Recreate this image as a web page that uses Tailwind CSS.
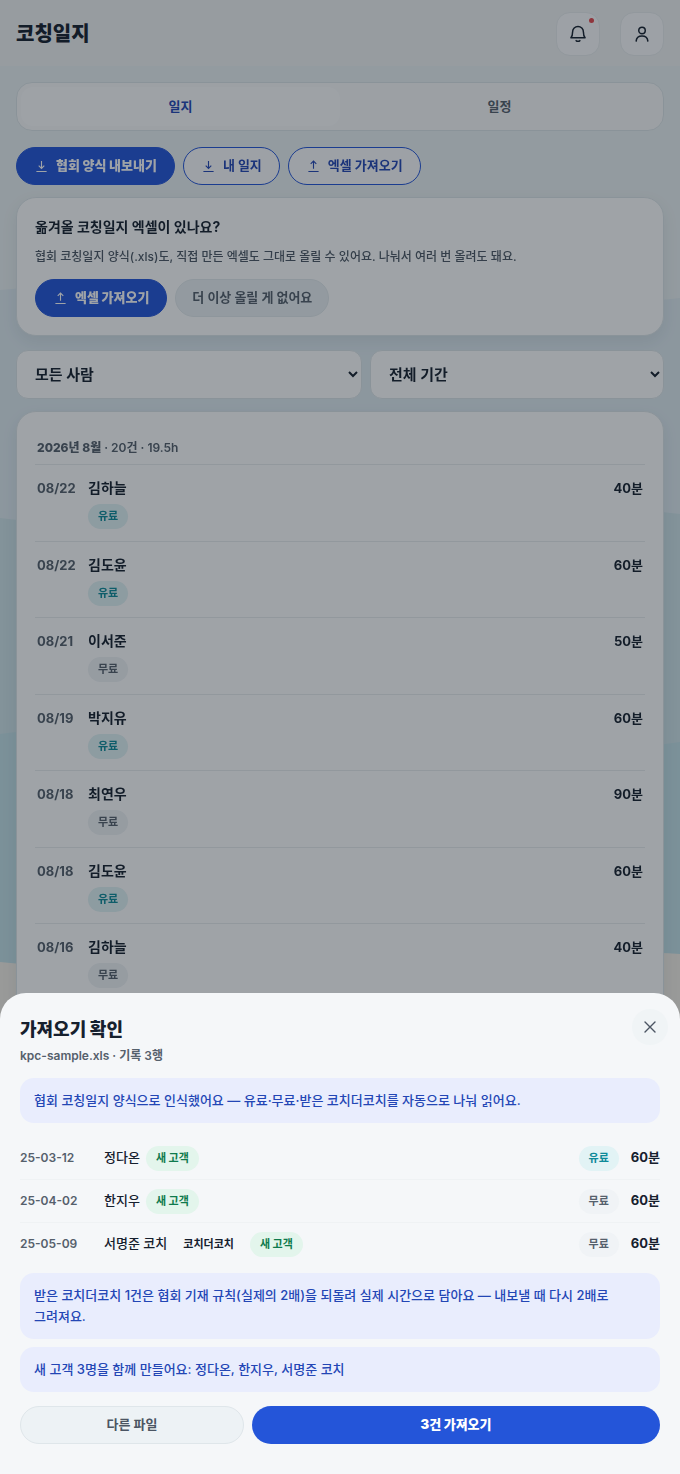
<!DOCTYPE html>
<html lang="ko">
<head>
  <meta charset="UTF-8" />
  <meta name="viewport" content="width=device-width, initial-scale=1.0"/>
  <title>코칭일지</title>
  <script src="https://cdn.jsdelivr.net/npm/@tailwindcss/browser@4"></script>
</head>
<body class="font-['Inter','Noto_Sans_CJK_KR',sans-serif] text-[#16202e] bg-[#ecf4f5] min-h-screen break-keep">

  <!-- 바다 배경 -->
  <svg class="fixed inset-0 w-full h-full -z-10" viewBox="0 0 680 1474" preserveAspectRatio="none" aria-hidden="true">
    <rect width="680" height="1474" fill="#ecf2f3"/>
    <path d="M0 290 C180 270 480 320 680 298 V1474 H0 Z" fill="#e0ebf1"/>
    <path d="M0 518 C180 540 480 490 680 514 V1474 H0 Z" fill="#d0e4e9"/>
    <path d="M0 734 C180 710 480 770 680 742 V1474 H0 Z" fill="#c4e1e8"/>
    <path d="M0 962 C180 980 480 940 680 954 V1474 H0 Z" fill="#f5f0e8"/>
  </svg>

  <div class="flex flex-col h-screen overflow-hidden">
    <header class="flex items-center justify-between h-[66px] px-4 pt-0.5 shrink-0 bg-[#f2f3f4]">
      <h1 class="text-[20px] leading-7 font-black">코칭일지</h1>
      <div class="flex gap-5">
        <button type="button" aria-label="알림" class="relative size-11 flex items-center justify-center rounded-[14px] bg-[#fcfcfd] border border-[#e9edee]">
          <svg class="size-5" viewBox="0 0 24 24" fill="none" stroke="currentColor" stroke-width="1.8" stroke-linecap="round" stroke-linejoin="round">
            <path d="M3.500 16.500h17c-1.500-1.500-2-3.500-2-7a6.500 6.500 0 0 0-13 0c0 3.500-.5 5.500-2 7Z"/>
            <path d="M9.800 20a2.600 1.800 0 0 0 4.400 0"/>
          </svg>
          <span class="absolute top-[5px] right-[5px] size-[5px] rounded-full bg-[#e5484d]"></span>
        </button>
        <button type="button" aria-label="내 정보" class="size-11 flex items-center justify-center rounded-[14px] bg-[#fcfcfd] border border-[#e9edee]">
          <svg class="size-5" viewBox="0 0 24 24" fill="none" stroke="currentColor" stroke-width="1.8" stroke-linecap="round" stroke-linejoin="round">
            <circle cx="12" cy="7.700" r="3.900"/>
            <path d="M5 20.500c.3-4 3.200-6 7-6s6.700 2 7 6"/>
          </svg>
        </button>
      </div>
    </header>

    <main class="flex flex-col flex-1 px-4 pt-4">
      <div class="grid grid-cols-2 shrink-0 h-[49px] p-1 rounded-2xl border border-[#dde5e8] bg-[#fafbfb] text-[13px] font-bold" role="tablist">
        <button type="button" role="tab" aria-selected="true" class="rounded-xl bg-[#fdfdfe] text-[#2346b5]">일지</button>
        <button type="button" role="tab" aria-selected="false" class="text-[#55606c]">일정</button>
      </div>

      <div class="flex gap-2 mt-4 text-[13px] font-bold">
        <button type="button" class="flex items-center gap-2 h-[38px] pl-[18px] pr-[17px] rounded-full border border-[#2455d9] bg-[#2455d9] text-white font-black">
          <svg class="size-[13px]" viewBox="0 0 14 14" fill="none" stroke="currentColor" stroke-width="1.2"><path d="M7 1v8M4 6l3 3 3-3M1.500 12.400h11"/></svg>
          협회 양식 내보내기
        </button>
        <button type="button" class="flex items-center gap-2 h-[38px] pl-[18px] pr-[17px] rounded-full border border-[#2455d9] bg-[#fcfcfd] text-[#2346b5]">
          <svg class="size-[13px]" viewBox="0 0 14 14" fill="none" stroke="currentColor" stroke-width="1.2"><path d="M7 1v8M4 6l3 3 3-3M1.500 12.400h11"/></svg>
          내 일지
        </button>
        <button type="button" class="flex items-center gap-2 h-[38px] pl-[18px] pr-[17px] rounded-full border border-[#2455d9] bg-[#fcfcfd] text-[#2346b5]">
          <svg class="size-[13px]" viewBox="0 0 14 14" fill="none" stroke="currentColor" stroke-width="1.2"><path d="M7 9.500V1.500M4 4.200l3-3 3 3M1.500 12.400h11"/></svg>
          엑셀 가져오기
        </button>
      </div>

      <section class="mt-3 px-[18px] py-[18px] rounded-[20px] border border-[#dde5e8] bg-white shadow-[0_6px_16px_rgba(20,50,70,0.08)]">
        <h2 class="text-[14px] leading-[22px] font-bold">옮겨올 코칭일지 엑셀이 있나요?</h2>
        <p class="mt-2 text-[12px] leading-[21px] font-medium text-[#4d5864]">협회 코칭일지 양식(.xls)도, 직접 만든 엑셀도 그대로 올릴 수 있어요. 나눠서 여러 번 올려도 돼요.</p>
        <div class="flex gap-2 mt-3 text-[13px] font-bold">
          <button type="button" class="flex items-center gap-2 h-[38px] pl-[18px] pr-[17px] rounded-full border border-[#2455d9] bg-[#2455d9] text-white font-black">
            <svg class="size-[13px]" viewBox="0 0 14 14" fill="none" stroke="currentColor" stroke-width="1.2"><path d="M7 9.500V1.500M4 4.200l3-3 3 3M1.500 12.400h11"/></svg>
            엑셀 가져오기
          </button>
          <button type="button" class="h-[38px] px-4 rounded-full border border-[#e3eaed] bg-[#ecf1f4] text-[#55606c]">더 이상 올릴 게 없어요</button>
        </div>
      </section>

      <div class="grid grid-cols-[346fr_294fr] gap-2 mt-[14px] text-[15px] font-bold">
        <select aria-label="사람" class="h-[49px] pl-[14px] rounded-xl border border-[#dde5e8] bg-white">
          <option>모든 사람</option>
        </select>
        <select aria-label="기간" class="h-[49px] pl-[14px] rounded-xl border border-[#dde5e8] bg-white">
          <option>전체 기간</option>
        </select>
      </div>

      <section class="flex-1 mt-3 px-[18px] pt-[18px] rounded-t-[20px] border border-[#dde5e8] bg-white shadow-[0_6px_16px_rgba(20,50,70,0.08)]">
        <h2 class="px-0.5 pt-[7px] pb-1.5 text-[12px] leading-[21px] font-semibold text-[#55606c] border-b border-[#e9edee]"><b class="font-extrabold">2026년 8월</b> · 20건 · 19.5h</h2>
        <ul id="logs"></ul>
      </section>
    </main>
  </div>

  <div class="fixed inset-0 bg-[#0f1a24]/40"></div>

  <div role="dialog" aria-labelledby="sheetTitle" class="fixed inset-x-0 bottom-0 px-5 pt-[25px] pb-[30px] rounded-t-[26px] bg-[#f5f7f9]">
    <button type="button" aria-label="닫기" class="absolute top-4 right-3 size-9 flex items-center justify-center rounded-full bg-[#f0f4f6] text-[#4b5563]">
      <svg class="size-3" viewBox="0 0 12 12" fill="none" stroke="currentColor" stroke-width="1.4" stroke-linecap="round"><path d="M1 1l10 10M11 1L1 11"/></svg>
    </button>
    <h2 id="sheetTitle" class="text-[18px] leading-6 font-black">가져오기 확인</h2>
    <p class="mt-1 text-[12px] leading-5 font-semibold text-[#55606c]">kpc-sample.xls · 기록 3행</p>
    <p class="mt-3 px-[14px] py-3 rounded-[14px] bg-[#e9edfd] text-[13px] leading-[21px] font-medium text-[#2346b5]">협회 코칭일지 양식으로 인식했어요 — 유료·무료·받은 코치더코치를 자동으로 나눠 읽어요.</p>

    <ul id="preview" class="mt-[14px] text-[13px]"></ul>

    <p class="mt-[7px] px-[14px] py-3 rounded-[14px] bg-[#e9edfd] text-[13px] leading-[21px] font-medium text-[#2346b5]">받은 코치더코치 1건은 협회 기재 규칙(실제의 2배)을 되돌려 실제 시간으로 담아요 — 내보낼 때 다시 2배로 그려져요.</p>
    <p class="mt-2 px-[14px] py-3 rounded-[14px] bg-[#e9edfd] text-[13px] leading-[21px] font-medium text-[#2346b5]">새 고객 3명을 함께 만들어요: 정다온, 한지우, 서명준 코치</p>

    <div class="grid grid-cols-[224fr_408fr] gap-2 mt-[14px] text-[13px] font-bold">
      <button type="button" class="h-[38px] rounded-full border border-[#dfe6ea] bg-[#edf2f5] text-[#4b5563]">다른 파일</button>
      <button type="button" class="h-[38px] rounded-full bg-[#2455d9] text-white font-black">3건 가져오기</button>
    </div>
  </div>

  <script>
    const logs = [
      ['08/22', '김하늘', '유료', 40],
      ['08/22', '김도윤', '유료', 60],
      ['08/21', '이서준', '무료', 50],
      ['08/19', '박지유', '유료', 60],
      ['08/18', '최연우', '무료', 90],
      ['08/18', '김도윤', '유료', 60],
      ['08/16', '김하늘', '무료', 40],
    ];

    const preview = [
      ['25-03-12', '정다온', false, '유료', 60],
      ['25-04-02', '한지우', false, '무료', 60],
      ['25-05-09', '서명준 코치', true, '무료', 60],
    ];

    const badge = 'flex items-center h-[25px] px-2.5 rounded-full text-[11px] font-bold';
    const feeColor = {
      '유료': 'bg-[#e2f3f5] text-[#0e8a99]',
      '무료': 'bg-[#f0f3f6] text-[#55606c]',
    };

    document.getElementById('logs').innerHTML = logs.map(([date, name, fee, min]) => `
      <li class="flex items-start h-[77px] even:h-[76px] px-0.5 pt-[13px] border-b border-[#e9edee] leading-[21px]">
        <span class="w-[51px] text-[13px] font-bold text-[#55606c]">${date}</span>
        <div class="flex-1 flex flex-col items-start gap-[7px]">
          <span class="text-[14px] leading-[19px] font-bold">${name}</span>
          <span class="${badge} ${feeColor[fee]}">${fee}</span>
        </div>
        <span class="text-[13px] font-bold">${min}분</span>
      </li>`).join('');

    document.getElementById('preview').innerHTML = preview.map(([date, name, coach, fee, min]) => `
      <li class="flex items-center h-[43px] border-b border-[#eff2f4] last:border-transparent">
        <span class="w-[84px] text-[12px] font-semibold text-[#55606c]">${date}</span>
        <div class="flex-1 flex items-center gap-[6px]">
          <span class="font-medium">${name}</span>
          ${coach ? `<span class="${badge}">코치더코치</span>` : ''}
          <span class="${badge} bg-[#e3f5ec] text-[#0f7a4d]">새 고객</span>
        </div>
        <span class="${badge} ${feeColor[fee]} mr-3">${fee}</span>
        <span class="font-bold">${min}분</span>
      </li>`).join('');
  </script>
</body>
</html>
